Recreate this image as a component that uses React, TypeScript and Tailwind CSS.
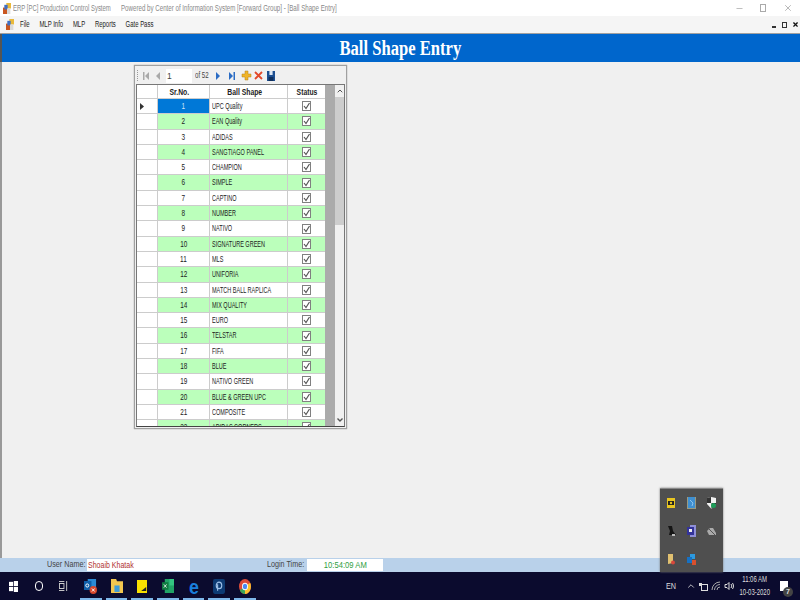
import { ChevronUp, Minus, X } from "lucide-react";

const shapes = [
  "UPC Quality",
  "EAN Quality",
  "ADIDAS",
  "SANGTIAGO PANEL",
  "CHAMPION",
  "SIMPLE",
  "CAPTINO",
  "NUMBER",
  "NATIVO",
  "SIGNATURE GREEN",
  "MLS",
  "UNIFORIA",
  "MATCH BALL RAPLICA",
  "MIX QUALITY",
  "EURO",
  "TELSTAR",
  "FIFA",
  "BLUE",
  "NATIVO GREEN",
  "BLUE & GREEN UPC",
  "COMPOSITE",
  "ADIDAS CORNERS",
];

function AppIcon() {
  return (
    <svg width="8" height="11" viewBox="0 0 12 12" preserveAspectRatio="none">
      <rect x="0" y="5" width="6" height="7" fill="#c9561f" />
      <rect x="5" y="0" width="7" height="6" fill="#e9b93a" />
      <rect x="2" y="2" width="5" height="5" fill="#3f6fc4" />
      <rect x="6" y="6" width="5" height="6" fill="#d9d9d9" />
    </svg>
  );
}

function GridToolbar() {
  return (
    <div className="flex h-[17px] items-center pl-[1px] text-[8.5px] text-[#444]">
      <div className="mr-[2px] h-[11px] w-[2px] border-l border-dotted border-[#999]" />
      <svg width="24" height="10" viewBox="0 0 24 10" fill="#a9a9a9">
        <rect x="2" y="1" width="1.5" height="8" />
        <path d="M8 1v8L4 5z" />
        <path d="M19 1v8L15 5z" />
      </svg>
      <div className="ml-[1px] h-[14px] w-[26px] bg-white pl-[1px] leading-[14px]">1</div>
      <div className="ml-[3px] w-[15px] whitespace-nowrap">
        <span className="inline-block origin-left scale-x-[0.72]">of 52</span>
      </div>
      <svg width="28" height="10" viewBox="0 0 28 10" fill="#2b6cc4" className="ml-[2px]">
        <path d="M4 1v8l4-4z" />
        <path d="M17 1v8l4-4z" />
        <rect x="21.5" y="1" width="1.5" height="8" />
      </svg>
      <svg width="11" height="11" viewBox="0 0 11 11" className="ml-[1px]">
        <path d="M4 1h3v3h3v3H7v3H4V7H1V4h3z" fill="#f0b429" stroke="#b5801a" strokeWidth="0.5" />
      </svg>
      <svg width="11" height="11" viewBox="0 0 11 11" className="ml-[1px]">
        <path d="M2 2l7 7M9 2l-7 7" stroke="#e2492b" strokeWidth="1.8" />
      </svg>
      <svg width="8" height="10" viewBox="0 0 10 10" preserveAspectRatio="none" className="ml-[3px]">
        <path d="M0 0h10v10H0z" fill="#1d4f91" />
        <rect x="3" y="0" width="4" height="4" fill="#dfe8f3" />
        <rect x="2" y="6" width="6" height="4" fill="#0f2f5c" />
      </svg>
    </div>
  );
}

function ShapeGrid() {
  return (
    <div className="flex h-[343px] overflow-hidden border border-[#777] border-b-[#444] bg-[#ababab] text-[#222]">
      <div className="w-[188px] shrink-0 overflow-hidden">
        <div className="flex h-[14px] bg-white text-center text-[8.5px] font-bold">
          <div className="w-[21px] border-r border-b border-[#ccc]" />
          <div className="w-[52px] border-r border-b border-[#ccc] pr-[8px] leading-[14px]">
            <span className="inline-block scale-x-[0.8] whitespace-nowrap">Sr.No.</span>
          </div>
          <div className="w-[78px] border-r border-b border-[#ccc] pr-[8px] leading-[14px]">
            <span className="inline-block scale-x-[0.8] whitespace-nowrap">Ball Shape</span>
          </div>
          <div className="w-[37px] border-b border-[#ccc] leading-[14px]">
            <span className="inline-block scale-x-[0.8] whitespace-nowrap">Status</span>
          </div>
        </div>
        {shapes.map((shape, idx) => {
          const green = idx % 2 === 1;
          return (
            <div key={shape} className={`flex h-[15.3px] text-[8.5px] ${green ? "bg-[#bbffbb]" : "bg-white"}`}>
              <div className="flex w-[21px] items-center border-r border-b border-[#ccc] bg-white pl-[3px]">
                {idx === 0 && (
                  <svg width="4" height="7" viewBox="0 0 4 7">
                    <path d="M0 0l4 3.5L0 7z" fill="#333" />
                  </svg>
                )}
              </div>
              <div
                className={`w-[52px] border-r border-b border-[#ccc] text-center leading-[15px] ${
                  idx === 0 ? "bg-[#0078d7] text-[#cfe4f7]" : ""
                }`}
              >
                <span className="inline-block scale-x-[0.75]">{idx + 1}</span>
              </div>
              <div className="w-[78px] border-r border-b border-[#ccc] pl-[2px] leading-[15px] whitespace-nowrap">
                <span className="inline-block origin-left scale-x-[0.65]">{shape}</span>
              </div>
              <div className="flex w-[37px] items-center justify-center border-b border-[#ccc]">
                <div className="flex h-[10px] w-[9px] items-center justify-center border border-[#808080] bg-white">
                  <svg width="7" height="8" viewBox="0 0 7 8" fill="none" stroke="#555" strokeWidth="1.2">
                    <path d="M1 4l2 2.5L6.5 1" />
                  </svg>
                </div>
              </div>
            </div>
          );
        })}
      </div>
      <div className="flex-1" />
      <div className="flex w-[9px] shrink-0 flex-col bg-[#f0f0f0]">
        <div className="flex h-[12px] items-center justify-center">
          <ChevronUp size={8} strokeWidth={3} color="#555" />
        </div>
        <div className="h-[128px] bg-[#cdcdcd]" />
        <div className="flex-1" />
        <div className="flex h-[12px] items-center justify-center">
          <svg width="6" height="4" viewBox="0 0 6 4" fill="none" stroke="#555" strokeWidth="1.4">
            <path d="M0.5 0.5L3 3l2.5-2.5" />
          </svg>
        </div>
      </div>
    </div>
  );
}

function TaskApp({ children }: { children: React.ReactNode }) {
  return (
    <div className="relative flex h-[28px] w-[25.7px] items-center justify-center">
      {children}
      <div className="absolute right-[2px] bottom-0 left-[2px] h-[2px] bg-[#7fb8ea]" />
    </div>
  );
}

function Taskbar() {
  return (
    <div className="flex h-[28px] shrink-0 items-center bg-[#0b0b2e] text-white">
      <div className="flex w-[78px] items-center pl-[9px]">
        <svg width="9" height="11" viewBox="0 0 13 13" fill="#fff" preserveAspectRatio="none">
          <rect x="0" y="1" width="6" height="5" />
          <rect x="7" y="0" width="6" height="6" />
          <rect x="0" y="7" width="6" height="5" />
          <rect x="7" y="7" width="6" height="6" />
        </svg>
        <div className="ml-[17px] h-[10px] w-[8px] rounded-full border-[1.5px] border-white" />
        <svg width="9" height="10" viewBox="0 0 10 10" fill="none" stroke="#ccc" className="ml-[16px]" preserveAspectRatio="none">
          <rect x="0.5" y="2.5" width="5" height="5" />
          <path d="M0 0.5h6M0 9.5h6M8.5 0v10" />
        </svg>
      </div>
      <div className="flex items-center">
        <TaskApp>
          <svg width="13" height="16" viewBox="0 0 14 16" preserveAspectRatio="none">
            <rect x="4" y="1" width="9" height="10" fill="#2a8ad4" />
            <rect x="0" y="3" width="8" height="9" fill="#0f5ea8" />
            <circle cx="3.5" cy="7.5" r="1.6" fill="none" stroke="#fff" />
            <ellipse cx="10" cy="12" rx="4" ry="4" fill="#d8472b" />
            <path d="M8.5 10.5l3 3M11.5 10.5l-3 3" stroke="#fff" />
          </svg>
        </TaskApp>
        <TaskApp>
          <svg width="12" height="14" viewBox="0 0 14 13" preserveAspectRatio="none">
            <path d="M0 0h6l1 2h7v11H0z" fill="#f3c64f" />
            <rect x="4" y="6" width="6" height="6" fill="#3e9bd9" />
          </svg>
        </TaskApp>
        <TaskApp>
          <svg width="10" height="13" viewBox="0 0 12 13" preserveAspectRatio="none">
            <rect x="0" y="0" width="12" height="13" fill="#f9e000" />
            <path d="M5 11l6-4v4z" fill="#222" />
          </svg>
        </TaskApp>
        <TaskApp>
          <svg width="12" height="14" viewBox="0 0 13 13" preserveAspectRatio="none">
            <rect x="3" y="0" width="10" height="13" fill="#21a366" />
            <rect x="8" y="0" width="5" height="6" fill="#33c481" />
            <rect x="0" y="3" width="7" height="7" fill="#107c41" />
            <path d="M2 5l3 3M5 5l-3 3" stroke="#fff" strokeWidth="0.8" />
          </svg>
        </TaskApp>
        <TaskApp>
          <span className="inline-block scale-x-[0.85] text-[21px] leading-none font-bold text-[#1a7fdc]">e</span>
        </TaskApp>
        <TaskApp>
          <svg width="12" height="15" viewBox="0 0 13 14" preserveAspectRatio="none">
            <rect width="13" height="14" rx="2" fill="#0d3a73" />
            <circle cx="6.5" cy="6" r="3" fill="none" stroke="#9fc0e8" strokeWidth="1.2" />
            <path d="M5 5v6" stroke="#9fc0e8" strokeWidth="1.2" />
          </svg>
        </TaskApp>
        <TaskApp>
          <svg width="12" height="15" viewBox="0 0 14 14" preserveAspectRatio="none">
            <circle cx="7" cy="7" r="7" fill="#dd4b39" />
            <path d="M7 7L1 10.5A7 7 0 0 0 7 14z" fill="#3aa757" />
            <path d="M7 7v7a7 7 0 0 0 6-10.5z" fill="#fbc02d" />
            <circle cx="7" cy="7" r="3" fill="#4a8af4" stroke="#fff" />
          </svg>
        </TaskApp>
      </div>
      <div className="flex-1" />
      <div className="flex items-center text-[8.5px] text-[#ddd]">
        <span className="inline-block scale-x-[0.85]">EN</span>
        <ChevronUp size={10} className="ml-[9px]" />
        <svg width="9" height="9" viewBox="0 0 9 9" className="ml-[3px]" fill="#ddd">
          <rect x="2.5" y="2.5" width="6" height="6" fill="none" stroke="#ddd" />
          <rect x="0" y="1" width="3" height="3" />
        </svg>
        <svg width="10" height="10" viewBox="0 0 10 10" fill="none" stroke="#aaa" className="ml-[3px]">
          <path d="M1 9a8 8 0 0 1 8-8M3.5 9A5.5 5.5 0 0 1 9 3.5M6 9a3 3 0 0 1 3-3" />
        </svg>
        <svg width="10" height="10" viewBox="0 0 10 10" fill="none" stroke="#ddd" className="ml-[3px]">
          <path d="M1 3.5h2l2-2v7l-2-2H1zM7 3a3 3 0 0 1 0 4M8.5 2a4.5 4.5 0 0 1 0 6" />
        </svg>
        <div className="ml-[5px] flex w-[32px] flex-col items-center leading-[13px] whitespace-nowrap">
          <div className="scale-x-[0.7]">11:06 AM</div>
          <div className="scale-x-[0.7]">10-03-2020</div>
        </div>
        <div className="relative mr-[12px] ml-[9px] h-[10px] w-[8px] bg-white">
          <div className="absolute -right-[5px] -bottom-[6px] h-[10px] w-[10px] rounded-full bg-[#444] text-center text-[7px] leading-[10px] font-bold">
            7
          </div>
        </div>
      </div>
    </div>
  );
}

function TrayIcon({ children }: { children: React.ReactNode }) {
  return <div className="flex h-[12px] items-center justify-center">{children}</div>;
}

function TrayPopup() {
  return (
    <div className="absolute top-[488px] left-[660px] grid h-[84px] w-[63px] grid-cols-3 content-start gap-y-[16px] border-t border-[#888] bg-[#4f4f4f] px-[1px] pt-[8px] shadow-[0_0_2px_#777]">
      <TrayIcon>
        <svg width="8" height="10" viewBox="0 0 8 10">
          <rect width="8" height="10" fill="#e8c520" />
          <rect x="1" y="3" width="6" height="4" fill="#222" />
          <circle cx="4" cy="5" r="1.2" fill="#e8c520" />
        </svg>
      </TrayIcon>
      <TrayIcon>
        <svg width="9" height="12" viewBox="0 0 9 12">
          <rect width="9" height="12" fill="#9a9a80" />
          <rect x="1" y="0" width="7" height="11" fill="#3f8fd0" />
          <path d="M3 3l3 3-1 3" stroke="#8cc4ee" fill="none" />
        </svg>
      </TrayIcon>
      <TrayIcon>
        <svg width="9" height="12" viewBox="0 0 9 12">
          <path d="M0 1l4.5-1L9 1v6l-4.5 5L0 7z" fill="#f2f2f2" />
          <path d="M4 0v6H0V1zM4.5 6H9v1l-4.5 5z" fill="#333" />
          <circle cx="6.5" cy="8.5" r="2.5" fill="#1e9e5a" />
        </svg>
      </TrayIcon>
      <TrayIcon>
        <svg width="9" height="12" viewBox="0 0 9 12">
          <path d="M1 1l4 0 1 5 3 4H2l1-4z" fill="#151515" />
          <rect x="5" y="9" width="3" height="2" fill="#bbb" />
        </svg>
      </TrayIcon>
      <TrayIcon>
        <svg width="9" height="12" viewBox="0 0 9 12">
          <rect x="3" y="0" width="6" height="12" fill="#8f8fd8" />
          <rect x="0" y="2" width="7" height="8" fill="#33339a" />
          <rect x="2" y="4" width="3" height="3" fill="#eee" />
        </svg>
      </TrayIcon>
      <TrayIcon>
        <svg width="9" height="9" viewBox="0 0 9 9">
          <path d="M0 4l3-3h3l3 5v2H2z" fill="#aaa" />
          <path d="M1 1l7 7" stroke="#555" />
        </svg>
      </TrayIcon>
      <TrayIcon>
        <svg width="8" height="11" viewBox="0 0 8 11">
          <path d="M1 0h5v9L1 10z" fill="#e0c070" />
          <circle cx="6" cy="8.5" r="2" fill="#d8473c" />
        </svg>
      </TrayIcon>
      <TrayIcon>
        <svg width="9" height="11" viewBox="0 0 9 11">
          <rect x="3" y="0" width="5" height="5" fill="#2c9ae0" />
          <rect x="0" y="3" width="5" height="6" fill="#1671c4" />
          <rect x="5" y="6" width="4" height="5" fill="#d8502e" />
        </svg>
      </TrayIcon>
    </div>
  );
}

export default function App() {
  return (
    <div className="relative flex h-[600px] w-[800px] flex-col overflow-hidden bg-[#f0f0f0] font-['Liberation_Sans',sans-serif]">
      <div className="flex h-[16px] shrink-0 items-center bg-white pl-[3px] text-[8.5px] text-[#888]">
        <AppIcon />
        <div className="ml-[2px] w-[108px] shrink-0 whitespace-nowrap">
          <span className="inline-block origin-left scale-x-[0.7]">ERP [PC] Production Control System</span>
        </div>
        <div className="whitespace-nowrap">
          <span className="inline-block origin-left scale-x-[0.725]">
            Powered by Center of Information System [Forward Group] - [Ball Shape Entry]
          </span>
        </div>
        <div className="flex-1" />
        <Minus size={9} color="#aaa" className="mr-[16px]" />
        <div className="mr-[17px] h-[8px] w-[6px] border border-[#aaa]" />
        <X size={10} color="#aaa" className="mr-[7px]" />
      </div>

      <div className="flex h-[17px] shrink-0 items-center bg-[#f5f5f5] pl-[6px] text-[8.5px] text-[#222]">
        <AppIcon />
        <div className="ml-[6px] flex origin-left scale-x-[0.7] gap-x-[14px] whitespace-nowrap">
          <span>File</span>
          <span>MLP Info</span>
          <span>MLP</span>
          <span>Reports</span>
          <span>Gate Pass</span>
        </div>
        <div className="flex-1" />
        <div className="mt-[4px] mr-[6px] h-[2px] w-[4px] bg-[#333]" />
        <div className="mr-[5px] h-[6px] w-[5px] border border-[#333]" />
        <X size={7} strokeWidth={4} color="#111" className="mr-[1px]" />
      </div>

      <div className="h-[1px] shrink-0 bg-[#a0a0a0]" />
      <div className="flex h-[28px] shrink-0 items-center justify-center border-l-2 border-[#555] bg-[#0066cc] pr-[2px] font-['Liberation_Serif',serif] text-[20px] font-bold text-white">
        <span className="inline-block scale-x-[0.83] whitespace-nowrap">Ball Shape Entry</span>
      </div>

      <div className="flex-1 border-l-2 border-[#999] pt-[3px] pl-[132px]">
        <div className="w-[213px] border border-[#a0a0a0] bg-[#f0f0f0] p-px shadow-[0_0_1px_#888]">
          <GridToolbar />
          <ShapeGrid />
        </div>
      </div>

      <div className="flex h-[14px] shrink-0 items-center bg-[#b9d1ea] text-[9px] text-[#444]">
        <span className="ml-[47px] inline-block w-[40px] origin-left scale-x-[0.8] whitespace-nowrap">User Name:</span>
        <div className="h-[12px] w-[103px] bg-white pl-[1px] leading-[12px] whitespace-nowrap text-[#b03030]">
          <span className="inline-block origin-left scale-x-[0.78]">Shoaib Khatak</span>
        </div>
        <span className="ml-[77px] inline-block w-[40px] origin-left scale-x-[0.8] whitespace-nowrap">Login Time:</span>
        <div className="h-[12px] w-[76px] bg-white text-center leading-[12px] whitespace-nowrap text-[#2f9e3f]">
          <span className="inline-block scale-x-[0.85]">10:54:09 AM</span>
        </div>
      </div>

      <Taskbar />
      <TrayPopup />
    </div>
  );
}
